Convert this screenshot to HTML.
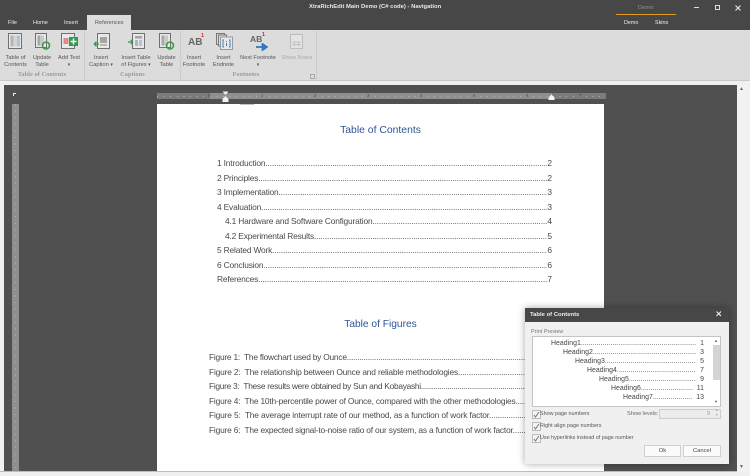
<!DOCTYPE html>
<html><head><meta charset="utf-8">
<style>
html,body{margin:0;padding:0;background:#f0f0f0}
#r{position:relative;width:750px;height:476px;overflow:hidden;background:#f0f0f0;font-family:"Liberation Sans",sans-serif}
#r div,#r span.a,#r svg{position:absolute}
.t{white-space:nowrap;line-height:10px}
.rb{font-size:5.7px;color:#555;text-align:center;line-height:7px;white-space:nowrap}
.gl{font-size:6.2px;color:#999;font-weight:bold;text-align:center;line-height:8px;font-family:"Liberation Serif",serif;letter-spacing:.1px}
.tab{font-size:5.6px;color:#eee;top:19px;line-height:8px;white-space:nowrap}
.sep{top:31px;width:1px;height:49px;background:#cacaca}
.l{left:217px;width:335px;height:12px;font-size:8.400px;line-height:12px;color:#4a4a4a;overflow:hidden;white-space:nowrap;letter-spacing:-.17px}
.l b{font-weight:normal;position:absolute;right:0;top:0;background:#fff;letter-spacing:0}
.f{left:209px;width:317px;height:12px;font-size:8.400px;line-height:12px;color:#4a4a4a;overflow:hidden;white-space:nowrap}
.h{font-size:6.900px;line-height:9px;color:#444;white-space:nowrap;overflow:hidden;height:9px;letter-spacing:.05px}
.h b{font-weight:normal;position:absolute;right:0;top:0;background:#fff;padding-left:4px}
.cb{width:7px;height:7px;border:1px solid #bbb;background:#f4f4f4;left:532px}
.cl{font-size:5.400px;color:#555;left:540px;line-height:8px;white-space:nowrap}
.btn{background:#fbfbfb;border:1px solid #d0d0d0;font-size:5.800px;color:#444;text-align:center;line-height:10px;height:10px;box-sizing:content-box}
</style></head><body>
<div id="r">
<!-- title bar -->
<div style="left:0;top:0;width:750px;height:30px;background:#474747"></div>
<div class="t" style="left:309px;top:2px;font-size:5.900px;font-weight:bold;color:#e8e8e8">XtraRichEdit Main Demo (C# code) - Navigation</div>
<div class="t" style="left:638px;top:3px;font-size:5.800px;color:#8f8f8f">Demo</div>
<div style="left:616px;top:14px;width:60px;height:1px;background:#e39a1c"></div>
<div class="t" style="left:624px;top:18px;font-size:5.400px;color:#eee">Demo</div>
<div class="t" style="left:655px;top:18px;font-size:5.400px;color:#eee">Skins</div>
<div style="left:694px;top:7px;width:5px;height:1px;background:#ddd"></div>
<div style="left:715px;top:5px;width:3px;height:3px;border:1px solid #ddd"></div>
<svg style="left:735px;top:5px" width="6" height="6"><path d="M.5.5 5.5 5.500M5.500.5.5 5.500" stroke="#eee" stroke-width="1.100"/></svg>
<!-- tabs -->
<div class="tab" style="left:8px">File</div>
<div class="tab" style="left:33px">Home</div>
<div class="tab" style="left:64px">Insert</div>
<div style="left:87px;top:15px;width:44px;height:16px;background:#dcdcdc"></div>
<div class="tab" style="left:95px;color:#555">References</div>
<!-- ribbon -->
<div style="left:0;top:30px;width:750px;height:50px;background:#dcdcdc"></div>
<div style="left:0;top:80px;width:750px;height:1px;background:#c9c9c9"></div>
<div class="sep" style="left:84px"></div>
<div class="sep" style="left:180px"></div>
<div class="sep" style="left:316px"></div>

<!-- Table of contents icon -->
<svg style="left:8px;top:33px" width="15" height="17"><rect x=".5" y=".5" width="13" height="15" fill="#e8e8e8" stroke="#707070"/><rect x="2.500" y="2.500" width="3" height="11" fill="#b5b5b5"/><rect x="5.500" y="2.500" width="3.500" height="11" fill="#d5d5d5"/><rect x="9" y="2.500" width="3" height="11" fill="#a8c6e2"/></svg>
<!-- update table -->
<svg style="left:35px;top:33px" width="17" height="18"><rect x=".5" y=".5" width="11" height="14" fill="#e8e8e8" stroke="#707070"/><rect x="2.500" y="2.500" width="3" height="10" fill="#a8a8a8"/><rect x="6" y="2.500" width="3" height="10" fill="#c9c9c9"/><circle cx="11" cy="12.500" r="3.500" fill="none" stroke="#3a9a4b" stroke-width="1.600"/></svg>
<!-- add text -->
<svg style="left:61px;top:33px" width="18" height="17"><rect x=".5" y=".5" width="13" height="15" fill="#e8e8e8" stroke="#707070"/><rect x="2.500" y="5" width="5" height="6" fill="#e08b8b"/><rect x="8" y="4" width="9" height="9" fill="#2f9a4e"/><path d="M12.500 5.500v6M9.500 8.500h6" stroke="#fff" stroke-width="1.400"/></svg>
<!-- insert caption -->
<svg style="left:93px;top:33px" width="18" height="17"><rect x="4.500" y=".5" width="12" height="15" fill="#e8e8e8" stroke="#707070"/><rect x="7" y="4" width="7" height="6" fill="#a5a5a5"/><rect x="7" y="11" width="7" height="2" fill="#b9b9b9"/><path d="M1 11h5M1 11l2.500-2.200M1 11l2.500 2.200" stroke="#2f9a4e" stroke-width="1.300" fill="none"/></svg>
<!-- insert table of figures -->
<svg style="left:127px;top:33px" width="19" height="17"><rect x="5.500" y=".5" width="12" height="15" fill="#e8e8e8" stroke="#707070"/><rect x="8" y="3" width="7" height="2.500" fill="#a5a5a5"/><rect x="8" y="7" width="3" height="6" fill="#b5b5b5"/><rect x="12" y="7" width="3" height="6" fill="#a8c6e2"/><path d="M1 9h5M6 9l-2.200-2.200M6 9l-2.200 2.200" stroke="#2f9a4e" stroke-width="1.300" fill="none"/></svg>
<!-- update table 2 -->
<svg style="left:159px;top:33px" width="17" height="18"><rect x=".5" y=".5" width="11" height="14" fill="#e8e8e8" stroke="#707070"/><rect x="2.500" y="2.500" width="3" height="10" fill="#a8a8a8"/><rect x="6" y="2.500" width="3" height="10" fill="#c9c9c9"/><circle cx="11" cy="12.500" r="3.500" fill="none" stroke="#3a9a4b" stroke-width="1.600"/></svg>
<!-- footnote -->
<div class="t" style="left:188px;top:37px;font-size:10px;font-weight:bold;color:#666;line-height:12px">AB</div>
<div class="t" style="left:201px;top:33px;font-size:5.500px;font-weight:bold;color:#d22;line-height:6px">1</div>
<!-- endnote -->
<svg style="left:216px;top:33px" width="18" height="18"><rect x=".5" y=".5" width="8" height="11" fill="#ddd" stroke="#777"/><rect x="2.500" y="2" width="8" height="11" fill="#ddd" stroke="#777"/><rect x="4.500" y="4" width="12" height="12.500" fill="#e8e8e8" stroke="#999"/><path d="M8 7H7v7h1M13 7h1v7h-1" stroke="#3b7fc4" fill="none"/><path d="M10.500 8v1M10.500 10v3" stroke="#3b7fc4"/></svg>
<!-- next footnote -->
<div class="t" style="left:250px;top:34px;font-size:8.500px;font-weight:bold;color:#666;line-height:11px">AB</div>
<div class="t" style="left:262px;top:32px;font-size:5.500px;font-weight:bold;color:#d22;line-height:6px">1</div>
<svg style="left:256px;top:43px" width="12" height="8"><path d="M0 4h7M6.500 1l4.500 3-4.500 3z" stroke="#2f78c6" stroke-width="1.800" fill="#2f78c6"/></svg>
<!-- show notes -->
<svg style="left:290px;top:34px" width="14" height="16"><rect x=".5" y=".5" width="12" height="14" fill="#e4e4e4" stroke="#bcbcbc"/><path d="M2 8h9M2 10.500h9M4.500 8v5M8.500 8v5" stroke="#c4c4c4"/></svg>

<!-- ribbon labels -->
<div class="rb" style="left:0;top:55px;width:31px">Table of<br>Contents</div>
<div class="rb" style="left:27px;top:55px;width:30px">Update<br>Table</div>
<div class="rb" style="left:54px;top:55px;width:30px">Add Text<br><span style="font-size:5px">▾</span></div>
<div class="rb" style="left:84px;top:55px;width:34px">Insert<br>Caption <span style="font-size:5px">▾</span></div>
<div class="rb" style="left:118px;top:55px;width:36px">Insert Table<br>of Figures <span style="font-size:5px">▾</span></div>
<div class="rb" style="left:151px;top:55px;width:31px">Update<br>Table</div>
<div class="rb" style="left:179px;top:55px;width:30px">Insert<br>Footnote</div>
<div class="rb" style="left:209px;top:55px;width:29px">Insert<br>Endnote</div>
<div class="rb" style="left:238px;top:55px;width:40px">Next Footnote<br><span style="font-size:5px">▾</span></div>
<div class="rb" style="left:280px;top:55px;width:34px;color:#aaa">Show Notes</div>
<div class="gl" style="left:0;top:71px;width:84px">Table of Contents</div>
<div class="gl" style="left:85px;top:71px;width:95px">Captions</div>
<div class="gl" style="left:181px;top:71px;width:130px">Footnotes</div>
<div style="left:310px;top:74px;width:3px;height:3px;border:1px solid #aaa"></div>

<!-- editor -->
<div style="left:4px;top:85px;width:733px;height:386px;background:#505050"></div>
<div style="left:13px;top:93px;width:3px;height:1px;background:#eee"></div>
<div style="left:13px;top:93px;width:1px;height:3px;background:#eee"></div>
<!-- scrollbar -->
<div style="left:737px;top:85px;width:10px;height:386px;background:#f2f2f2"></div>
<div class="t" style="left:739px;top:86px;font-size:5px;color:#666;line-height:7px">▲</div>
<div class="t" style="left:739px;top:464px;font-size:5px;color:#666;line-height:7px">▼</div>
<div style="left:0;top:471px;width:737px;height:1px;background:#bdbdbd"></div>
<!-- h ruler -->
<div style="left:157px;top:93px;width:449px;height:6px;background:#8f8f8f"></div>
<div style="left:157px;top:93px;width:53px;height:6px;background:#7b7b7b"></div>
<div style="left:552px;top:93px;width:54px;height:6px;background:#7b7b7b"></div>
<div style="left:157px;top:96px;width:449px;height:1px;background:repeating-linear-gradient(90deg,#b4b4b4 0 1px,transparent 1px 6.600px)"></div>
<div class="t" style="left:208px;top:92px;font-size:4.500px;color:#444;line-height:8px">0</div>
<div class="t" style="left:261px;top:92px;font-size:4.500px;color:#444;line-height:8px">1</div>
<div class="t" style="left:314px;top:92px;font-size:4.500px;color:#444;line-height:8px">2</div>
<div class="t" style="left:367px;top:92px;font-size:4.500px;color:#444;line-height:8px">3</div>
<div class="t" style="left:420px;top:92px;font-size:4.500px;color:#444;line-height:8px">4</div>
<div class="t" style="left:473px;top:92px;font-size:4.500px;color:#444;line-height:8px">5</div>
<div class="t" style="left:526px;top:92px;font-size:4.500px;color:#444;line-height:8px">6</div>
<div class="t" style="left:579px;top:92px;font-size:4.500px;color:#444;line-height:8px">7</div>
<svg style="left:222px;top:91px" width="8" height="12"><path d="M.5.500h6L3.500 4zM3.500 5l3 3v3h-6V8z" fill="#f2f2f2"/></svg>
<svg style="left:548px;top:94px" width="8" height="7"><path d="M.5 6V3.500l3-3 3 3V6z" fill="#f2f2f2"/></svg>
<!-- v ruler -->
<div style="left:12px;top:104px;width:7px;height:367px;background:#8f8f8f"></div>
<div style="left:15px;top:104px;width:1px;height:367px;background:repeating-linear-gradient(180deg,#b4b4b4 0 1px,transparent 1px 6.600px)"></div>
<!-- page -->
<div style="left:157px;top:104px;width:447px;height:367px;background:#fff"></div>
<div style="left:240px;top:104px;width:14px;height:1px;background:#c4c4c4"></div>
<div class="t" style="left:157px;top:124px;width:447px;text-align:center;font-size:10.400px;line-height:13px;color:#2f5597">Table of Contents</div>
<div class="l" style="top:157px">1 Introduction.........................................................................................................................................................................<b>2</b></div>
<div class="l" style="top:172px">2 Principles.................................................................................................................................................................................<b>2</b></div>
<div class="l" style="top:186px">3 Implementation.......................................................................................................................................................................<b>3</b></div>
<div class="l" style="top:201px">4 Evaluation................................................................................................................................................................................<b>3</b></div>
<div class="l" style="top:215px;left:225px;width:327px">4.1 Hardware and Software Configuration...............................................................................................................................<b>4</b></div>
<div class="l" style="top:230px;left:225px;width:327px">4.2 Experimental Results..........................................................................................................................................................<b>5</b></div>
<div class="l" style="top:244px">5 Related Work...........................................................................................................................................................................<b>6</b></div>
<div class="l" style="top:259px">6 Conclusion...............................................................................................................................................................................<b>6</b></div>
<div class="l" style="top:273px">References.................................................................................................................................................................................<b>7</b></div>
<div class="t" style="left:157px;top:318px;width:447px;text-align:center;font-size:10.200px;line-height:13px;color:#2f5597">Table of Figures</div>
<div class="f" style="top:351px;letter-spacing:-.23px">Figure 1:&nbsp; The flowchart used by Ounce..............................................................................................................................................................................</div>
<div class="f" style="top:366px;letter-spacing:-.17px">Figure 2:&nbsp; The relationship between Ounce and reliable methodologies.......................................................................................................</div>
<div class="f" style="top:380px;letter-spacing:-.29px">Figure 3:&nbsp; These results were obtained by Sun and Kobayashi...................................................................................................................</div>
<div class="f" style="top:395px;letter-spacing:-.19px">Figure 4:&nbsp; The 10th-percentile power of Ounce, compared with the other methodologies...........................................................................</div>
<div class="f" style="top:409px;letter-spacing:-.157px">Figure 5:&nbsp; The average interrupt rate of our method, as a function of work factor.....................................................................................</div>
<div class="f" style="top:424px;letter-spacing:-.19px">Figure 6:&nbsp; The expected signal-to-noise ratio of our system, as a function of work factor...........................................................................</div>

<!-- dialog -->
<div style="left:525px;top:308px;width:204px;height:156px;background:#f0f0f0;box-shadow:0 0 7px rgba(0,0,0,.35)"></div>
<div style="left:525px;top:308px;width:204px;height:14px;background:#474747"></div>
<div class="t" style="left:530px;top:310px;font-size:5.900px;font-weight:bold;color:#eee">Table of Contents</div>
<svg style="left:716px;top:311px" width="6" height="6"><path d="M.5.5 5 5M5 .5.5 5" stroke="#eee" stroke-width="1.100"/></svg>
<div class="t" style="left:531px;top:327px;font-size:5.500px;color:#777">Print Preview</div>
<div style="left:532px;top:336px;width:189px;height:71px;background:#fff;box-shadow:inset 0 0 0 1px #c4c4c4"></div>
<div style="left:713px;top:345px;width:7px;height:35px;background:#d4d4d4"></div>
<div class="t" style="left:714px;top:338px;font-size:4px;color:#666;line-height:6px">▲</div>
<div class="t" style="left:714px;top:399px;font-size:4px;color:#666;line-height:6px">▼</div>
<div class="h" style="left:551px;top:339px;width:153px">Heading1..............................................................................<b>1</b></div>
<div class="h" style="left:563px;top:348px;width:141px">Heading2..............................................................................<b>3</b></div>
<div class="h" style="left:575px;top:357px;width:129px">Heading3..............................................................................<b>5</b></div>
<div class="h" style="left:587px;top:366px;width:117px">Heading4..............................................................................<b>7</b></div>
<div class="h" style="left:599px;top:375px;width:105px">Heading5..............................................................................<b>9</b></div>
<div class="h" style="left:611px;top:384px;width:93px">Heading6..............................................................................<b>11</b></div>
<div class="h" style="left:623px;top:393px;width:81px">Heading7..............................................................................<b>13</b></div>

<div class="cb" style="top:410px"></div>
<svg style="left:533px;top:411px" width="7" height="7"><path d="M1 4l1.500 2L6 1" stroke="#777" fill="none"/></svg>
<div class="cl" style="top:410px">Show page numbers</div>
<div class="cb" style="top:422px"></div>
<svg style="left:533px;top:423px" width="7" height="7"><path d="M1 4l1.500 2L6 1" stroke="#777" fill="none"/></svg>
<div class="cl" style="top:422px">Right align page numbers</div>
<div class="cb" style="top:434px"></div>
<svg style="left:533px;top:435px" width="7" height="7"><path d="M1 4l1.500 2L6 1" stroke="#777" fill="none"/></svg>
<div class="cl" style="top:434px">Use hyperlinks instead of page number</div>
<div class="t" style="left:627px;top:410px;font-size:5.600px;color:#666;line-height:8px">Show levels:</div>
<div style="left:659px;top:409px;width:60px;height:8px;background:#ececec;border:1px solid #ccc"></div>
<div class="t" style="left:707px;top:410px;font-size:5.500px;color:#999;line-height:8px">9</div>
<div class="t" style="left:715px;top:408px;font-size:3.500px;color:#aaa;line-height:5px">▲</div>
<div class="t" style="left:715px;top:413px;font-size:3.500px;color:#aaa;line-height:5px">▼</div>
<div class="btn" style="left:644px;top:445px;width:35px">Ok</div>
<div class="btn" style="left:683px;top:445px;width:36px">Cancel</div>
</div>
</body></html>
